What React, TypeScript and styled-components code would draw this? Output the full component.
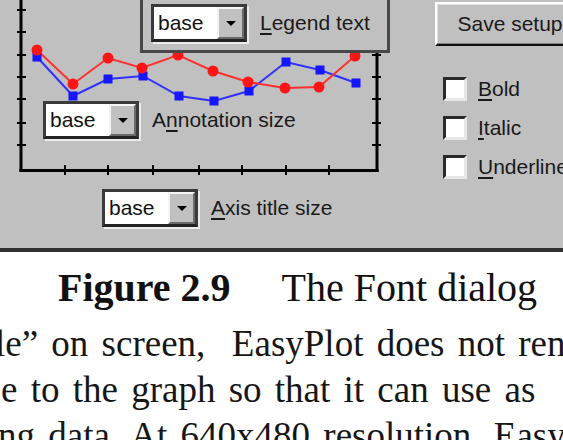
import React from 'react';
import styled, { createGlobalStyle } from 'styled-components';

const GlobalStyle = createGlobalStyle`
  html, body {
    margin: 0;
    padding: 0;
    background: #ffffff;
    overflow: hidden;
  }
`;

const Page = styled.div`
  width: 563px;
  height: 440px;
  overflow: hidden;
  background: #ffffff;
`;

const Dialog = styled.div`
  display: flex;
  height: 248px;
  background: #c0c0c0;
  border-bottom: 4px solid #303030;
  font-family: 'Liberation Sans', Arial, sans-serif;
  font-size: 21px;
  color: #1a1a1a;
`;

const LeftColumn = styled.div`
  flex: none;
  width: 435px;
`;

const ChartArea = styled.div`
  position: relative;
  width: 400px;
  height: 176px;
`;

const LegendBox = styled.div`
  position: absolute;
  left: 140px;
  top: -6px;
  width: 236px;
  height: 46px;
  padding: 7px 0 0 8px;
  border: 3px solid #474747;
  background: #c0c0c0;
`;

const AnnotationSlot = styled.div`
  position: absolute;
  left: 43px;
  top: 101px;
`;

const AxisRow = styled.div`
  padding: 13px 0 0 102px;
`;

const Field = styled.div`
  display: flex;
  align-items: center;
  gap: 13px;
`;

const Combo = styled.div`
  display: flex;
  width: 90px;
  height: 32px;
  border: 3px solid;
  border-color: #3a3a3a #3a3a3a #222222 #3a3a3a;
  box-shadow: 2px 2px 0 #ececec;
  background: #ffffff;
`;

const ComboText = styled.div`
  flex: 1;
  padding-left: 4px;
  line-height: 32px;
  color: #111;
`;

const DropButton = styled.div`
  flex: none;
  display: flex;
  align-items: center;
  justify-content: center;
  width: 23px;
  border: 2px solid;
  border-color: #f4f4f4 #6a6a6a #6a6a6a #f4f4f4;
  background: #c0c0c0;

  &::after {
    content: '';
    border-left: 5px solid transparent;
    border-right: 5px solid transparent;
    border-top: 5px solid #000;
  }
`;

const Label = styled.span`
  white-space: nowrap;
`;

const Key = styled.span`
  text-decoration: underline;
  text-decoration-thickness: 2px;
  text-underline-offset: 3px;
`;

const RightColumn = styled.div`
  flex: none;
  width: 150px;
  padding-top: 2px;
`;

const Button = styled.div`
  box-sizing: border-box;
  height: 44px;
  display: flex;
  align-items: center;
  justify-content: center;
  border: 2px solid;
  border-color: #ffffff #111111 #111111 #ffffff;
  box-shadow: inset -1px -1px 0 #808080, inset 1px 1px 0 #e0e0e0;
`;

const CheckList = styled.div`
  display: flex;
  flex-direction: column;
  gap: 15px;
  margin-top: 31px;
  padding-left: 8px;
`;

const CheckRow = styled.div`
  display: flex;
  align-items: center;
  gap: 11px;
  height: 24px;
`;

const CheckBox = styled.div`
  width: 18px;
  height: 18px;
  border: 3px solid;
  border-color: #2a2a2a #e8e8e8 #e8e8e8 #2a2a2a;
  background: #ffffff;
`;

const Caption = styled.div`
  margin-top: 16px;
  padding-left: 58px;
  font-family: 'Liberation Serif', 'Times New Roman', serif;
  font-size: 40px;
  line-height: 40px;
  color: #111;
  white-space: nowrap;
`;

const CaptionLabel = styled.span`
  font-weight: bold;
`;

const CaptionTitle = styled.span`
  margin-left: 51px;
`;

const Body = styled.div`
  margin-top: 13px;
  font-family: 'Liberation Serif', 'Times New Roman', serif;
  font-size: 37px;
  line-height: 46px;
  color: #161616;
`;

const Line = styled.div<{ $shift: number; $spacing: number }>`
  white-space: pre;
  margin-left: ${(p) => p.$shift}px;
  word-spacing: ${(p) => p.$spacing}px;
`;

const red = [
  [37, 50], [73, 84], [108, 58], [142, 68], [178, 55],
  [213, 71], [248, 82], [285, 88], [319, 87], [355, 56],
];
const blue = [
  [37, 57], [73, 96], [108, 79], [143, 76], [179, 96],
  [214, 101], [249, 91], [286, 62], [320, 70], [356, 83],
];
const yTicks = [10, 32, 55, 77, 99, 123, 145];
const xTicks = [65, 108, 153, 199, 242, 286, 329];

const Chart = () => (
  <svg width="400" height="176" viewBox="0 0 400 176" style={{ display: 'block' }}>
    <g stroke="#000" strokeWidth="3" fill="none">
      <line x1="21" y1="-4" x2="21" y2="172" />
      <line x1="19.5" y1="170.5" x2="378.5" y2="170.5" />
      <line x1="377" y1="30" x2="377" y2="172" />
    </g>
    <g stroke="#000" strokeWidth="2">
      {yTicks.map((y) => (
        <React.Fragment key={y}>
          <line x1="17" y1={y} x2="26" y2={y} />
          <line x1="372" y1={y} x2="381" y2={y} />
        </React.Fragment>
      ))}
      {xTicks.map((x) => (
        <line key={x} x1={x} y1="165" x2={x} y2="175" />
      ))}
    </g>
    <polyline points={blue.map((p) => p.join(',')).join(' ')} fill="none" stroke="#3030ff" strokeWidth="2" />
    <polyline points={red.map((p) => p.join(',')).join(' ')} fill="none" stroke="#ff3030" strokeWidth="2" />
    {blue.map(([x, y]) => (
      <rect key={x} x={x - 4.5} y={y - 4.5} width="9" height="9" fill="#1515ff" />
    ))}
    {red.map(([x, y]) => (
      <circle key={x} cx={x} cy={y} r="5.5" fill="#ff1515" />
    ))}
  </svg>
);

const SizeField = ({ children }: { children: React.ReactNode }) => (
  <Field>
    <Combo>
      <ComboText>base</ComboText>
      <DropButton />
    </Combo>
    <Label>{children}</Label>
  </Field>
);

const Check = ({ k, rest }: { k: string; rest: string }) => (
  <CheckRow>
    <CheckBox />
    <Label>
      <Key>{k}</Key>
      {rest}
    </Label>
  </CheckRow>
);

export default function App() {
  return (
    <Page>
      <GlobalStyle />
      <Dialog>
        <LeftColumn>
          <ChartArea>
            <Chart />
            <LegendBox>
              <SizeField>
                <Key>L</Key>egend text
              </SizeField>
            </LegendBox>
            <AnnotationSlot>
              <SizeField>
                A<Key>n</Key>notation size
              </SizeField>
            </AnnotationSlot>
          </ChartArea>
          <AxisRow>
            <SizeField>
              <Key>A</Key>xis title size
            </SizeField>
          </AxisRow>
        </LeftColumn>
        <RightColumn>
          <Button>Save setup</Button>
          <CheckList>
            <Check k="B" rest="old" />
            <Check k="I" rest="talic" />
            <Check k="U" rest="nderline" />
          </CheckList>
        </RightColumn>
      </Dialog>
      <Caption>
        <CaptionLabel>Figure 2.9</CaptionLabel>
        <CaptionTitle>The Font dialog</CaptionTitle>
      </Caption>
      <Body>
        <Line $shift={-5} $spacing={4}>{'le\u201D on screen,  EasyPlot does not render'}</Line>
        <Line $shift={1} $spacing={4}>e to the graph so that it can use as</Line>
        <Line $shift={-2} $spacing={4}>ng data. At 640x480 resolution, Easy</Line>
      </Body>
    </Page>
  );
}
